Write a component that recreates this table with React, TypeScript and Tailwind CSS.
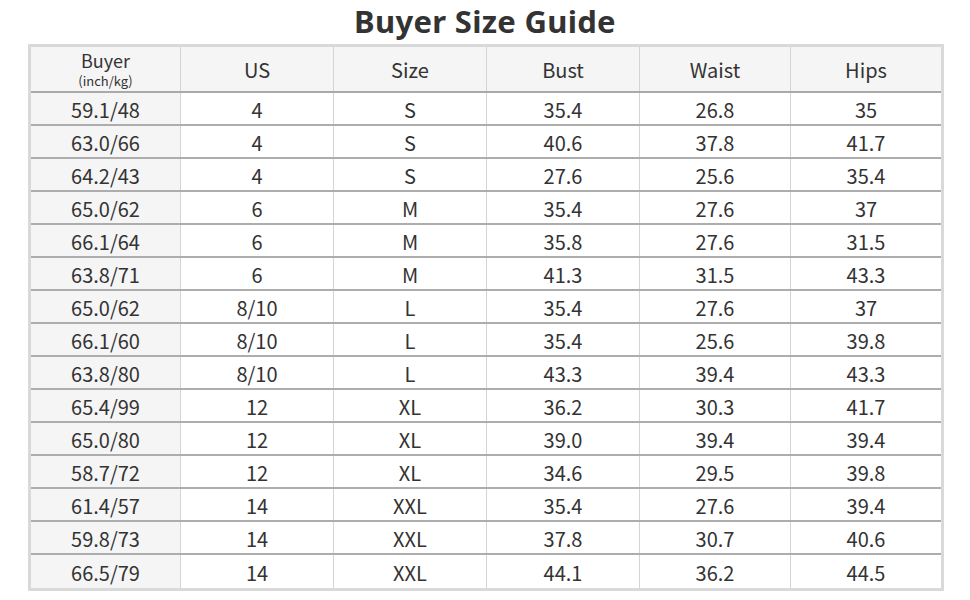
const columns = ['US', 'Size', 'Bust', 'Waist', 'Hips'];
const widths = ['w-[150px]', 'w-[153px]', 'w-[153px]', 'w-[153px]', 'w-[151px]', 'w-[150px]'];

const rows = [
  ['59.1/48', '4', 'S', '35.4', '26.8', '35'],
  ['63.0/66', '4', 'S', '40.6', '37.8', '41.7'],
  ['64.2/43', '4', 'S', '27.6', '25.6', '35.4'],
  ['65.0/62', '6', 'M', '35.4', '27.6', '37'],
  ['66.1/64', '6', 'M', '35.8', '27.6', '31.5'],
  ['63.8/71', '6', 'M', '41.3', '31.5', '43.3'],
  ['65.0/62', '8/10', 'L', '35.4', '27.6', '37'],
  ['66.1/60', '8/10', 'L', '35.4', '25.6', '39.8'],
  ['63.8/80', '8/10', 'L', '43.3', '39.4', '43.3'],
  ['65.4/99', '12', 'XL', '36.2', '30.3', '41.7'],
  ['65.0/80', '12', 'XL', '39.0', '39.4', '39.4'],
  ['58.7/72', '12', 'XL', '34.6', '29.5', '39.8'],
  ['61.4/57', '14', 'XXL', '35.4', '27.6', '39.4'],
  ['59.8/73', '14', 'XXL', '37.8', '30.7', '40.6'],
  ['66.5/79', '14', 'XXL', '44.1', '36.2', '44.5'],
];

export default function App() {
  return (
    <div className="w-[970px] h-[600px] bg-white text-[#333] font-['Noto_Sans_CJK_KR','Noto_Sans',sans-serif]">
      {/* Title */}
      <div className="h-[44px] flex justify-center items-start">
        <h1 className="text-[31px] leading-[42px] font-bold tracking-[0.3px] text-[#333] font-['Noto_Sans','Noto_Sans_CJK_KR',sans-serif]">
          Buyer Size Guide
        </h1>
      </div>

      {/* Table */}
      <div className="ml-[28px] w-[916px] border-[3px] border-[#d9d9d9]">
        <div className="flex h-[46px] bg-[#f5f5f5] border-b-2 border-[#a9a9a9]">
          <div className={`${widths[0]} shrink-0 flex flex-col items-center justify-center gap-[6px] border-r border-[#d4d4d4]`}>
            <div className="text-[18px] leading-[17px]">Buyer</div>
            <div className="text-[13px] leading-[12px]">(inch/kg)</div>
          </div>
          {columns.map((c, i) => (
            <div
              key={c}
              className={`${widths[i + 1]} shrink-0 flex items-center justify-center text-[20px] leading-none pt-[1px] ${i < columns.length - 1 ? 'border-r border-[#d4d4d4]' : ''}`}
            >
              {c}
            </div>
          ))}
        </div>

        {rows.map((row, r) => (
          <div
            key={r}
            className={`flex h-[33px] ${r < rows.length - 1 ? 'border-b-2 border-[#adadad]' : ''}`}
          >
            {row.map((cell, i) => (
              <div
                key={i}
                className={`${widths[i]} shrink-0 flex items-center justify-center text-[20px] leading-none pt-[3px] ${i === 0 ? 'bg-[#f5f5f5]' : 'bg-white'} ${i < row.length - 1 ? 'border-r border-[#d4d4d4]' : ''}`}
              >
                {cell}
              </div>
            ))}
          </div>
        ))}
      </div>
    </div>
  );
}
